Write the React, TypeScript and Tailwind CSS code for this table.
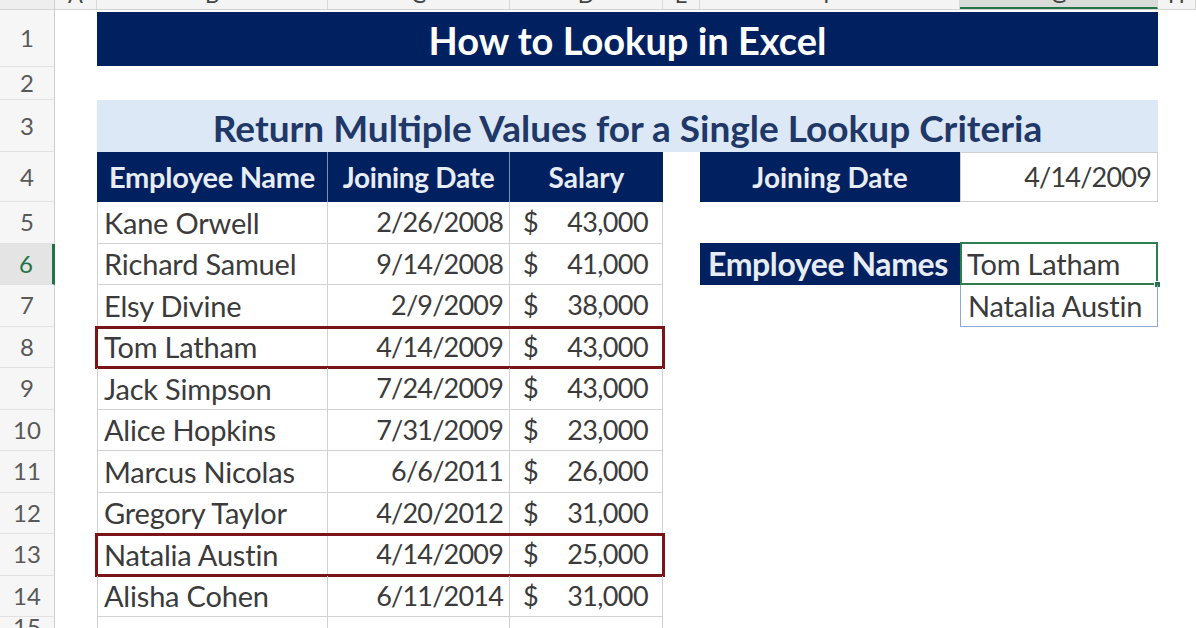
import React from 'react';

const rows = [
  { n: 5, name: 'Kane Orwell', date: '2/26/2008', salary: '43,000' },
  { n: 6, name: 'Richard Samuel', date: '9/14/2008', salary: '41,000' },
  { n: 7, name: 'Elsy Divine', date: '2/9/2009', salary: '38,000' },
  { n: 8, name: 'Tom Latham', date: '4/14/2009', salary: '43,000', hit: true },
  { n: 9, name: 'Jack Simpson', date: '7/24/2009', salary: '43,000' },
  { n: 10, name: 'Alice Hopkins', date: '7/31/2009', salary: '23,000' },
  { n: 11, name: 'Marcus Nicolas', date: '6/6/2011', salary: '26,000' },
  { n: 12, name: 'Gregory Taylor', date: '4/20/2012', salary: '31,000' },
  { n: 13, name: 'Natalia Austin', date: '4/14/2009', salary: '25,000', hit: true },
  { n: 14, name: 'Alisha Cohen', date: '6/11/2014', salary: '31,000' },
];

const cols = [
  { l: 'A', w: 'w-[42px]' },
  { l: 'B', w: 'w-[231px]' },
  { l: 'C', w: 'w-[182px]' },
  { l: 'D', w: 'w-[153px]' },
  { l: 'E', w: 'w-[37px]' },
  { l: 'F', w: 'w-[260px]' },
  { l: 'G', w: 'w-[198px]' },
  { l: 'H', w: 'flex-1' },
];

function RowHead({ n, active }: { n: number | string; active?: boolean }) {
  return (
    <div
      className={
        'w-[55px] shrink-0 flex items-center justify-center text-[24px] border-b border-[#e2e2e2] ' +
        (active
          ? 'bg-[#e4e4e4] text-[#217346] border-r-[3px] border-r-[#217346]'
          : 'bg-[#f6f6f6] text-[#595959] border-r border-r-[#cfcfcf]')
      }
    >
      {n}
    </div>
  );
}

export default function App() {
  return (
    <div
      className="w-[1196px] h-[628px] overflow-hidden bg-white text-[#3b3b3b]"
      style={{ fontFamily: 'Lato, "Open Sans", sans-serif' }}
    >
      {/* column header strip, mostly scrolled off */}
      <div className="flex h-[10px] overflow-hidden border-b border-[#d4d4d4]">
        <div className="w-[55px] shrink-0 bg-[#eeeeee] border-r border-[#cfcfcf]" />
        {cols.map(c => (
          <div
            key={c.l}
            className={
              c.w +
              ' shrink-0 flex justify-center border-r border-[#d8d8d8] ' +
              (c.l === 'G' ? 'bg-[#d9dcd9] border-b-2 border-b-[#217346]' : 'bg-[#f4f4f4]')
            }
          >
            <span className="text-[22px] leading-[24px] -mt-[17px] text-[#444]">{c.l}</span>
          </div>
        ))}
      </div>

      {/* row 1 */}
      <div className="flex h-[57px]">
        <RowHead n={1} />
        <div className="w-[42px] shrink-0" />
        <div className="w-[1061px] shrink-0 pt-[2px] pb-[1px]">
          <div className="h-full bg-[#002060] text-white font-bold text-[38px] flex items-center justify-center pt-[2px]">
            How to Lookup in Excel
          </div>
        </div>
      </div>

      {/* row 2 */}
      <div className="flex h-[33px]">
        <RowHead n={2} />
      </div>

      {/* row 3 */}
      <div className="flex h-[52px]">
        <RowHead n={3} />
        <div className="w-[42px] shrink-0" />
        <div className="w-[1061px] shrink-0 bg-[#dce8f6] text-[#1f3868] font-bold text-[37px] flex items-center justify-center pt-[4px]">
          Return Multiple Values for a Single Lookup Criteria
        </div>
      </div>

      {/* row 4 */}
      <div className="flex h-[50px]">
        <RowHead n={4} />
        <div className="w-[42px] shrink-0" />
        <div className="w-[566px] shrink-0 flex bg-[#002060] text-[#e8ecf5] font-bold text-[28px]">
          <div className="w-[231px] flex items-center justify-center border-r border-[#7d8fb8] text-[29px] tracking-[-0.3px]">Employee Name</div>
          <div className="w-[182px] flex items-center justify-center border-r border-[#7d8fb8] tracking-[-0.3px]">Joining Date</div>
          <div className="flex-1 flex items-center justify-center">Salary</div>
        </div>
        <div className="w-[37px] shrink-0" />
        <div className="w-[260px] shrink-0 bg-[#002060] text-[#e8ecf5] font-bold text-[28px] flex items-center justify-center">
          Joining Date
        </div>
        <div className="w-[198px] shrink-0 border border-[#d0d0d0] flex items-center justify-end pr-[6px] text-[27px] tracking-[-0.8px]">
          4/14/2009
        </div>
      </div>

      {/* rows 5-14 */}
      {rows.map(r => (
        <div key={r.n} className="flex h-[41.5px] relative">
          <RowHead n={r.n} active={r.n === 6} />
          <div className="w-[42px] shrink-0" />
          <div className="w-[231px] shrink-0 border-r border-b border-l border-[#d2d2d2] flex items-center pl-[6px] text-[29px] tracking-[-0.2px]">
            {r.name}
          </div>
          <div className="w-[182px] shrink-0 border-r border-b border-[#d2d2d2] flex items-center justify-end pr-[6px] text-[27px] tracking-[-0.8px]">
            {r.date}
          </div>
          <div className="w-[153px] shrink-0 border-r border-b border-[#d2d2d2] flex items-center justify-between pl-[13px] pr-[14px] text-[27px] tracking-[-0.6px]">
            <span>$</span>
            <span>{r.salary}</span>
          </div>
          <div className="w-[37px] shrink-0" />
          {r.n === 6 && (
            <>
              <div className="w-[260px] shrink-0 bg-[#002060] text-[#e8ecf5] font-bold text-[32px] flex items-center pl-[8px] -mt-[1px] tracking-[-0.4px]">
                Employee Names
              </div>
              <div className="w-[198px] shrink-0 relative border-2 border-[#2e7d4f] flex items-center pl-[5px] text-[29px] tracking-[-0.2px] -mt-[2px]">
                Tom Latham
                <div className="absolute -right-[5px] -bottom-[5px] w-[7px] h-[7px] bg-[#217346] border border-white" />
              </div>
            </>
          )}
          {r.n === 7 && (
            <>
              <div className="w-[260px] shrink-0" />
              <div className="w-[198px] shrink-0 border border-t-0 border-[#8ea6d8] flex items-center pl-[7px] text-[29px] tracking-[-0.2px]">
                Natalia Austin
              </div>
            </>
          )}
          {r.hit && (
            <div className="absolute left-[95px] w-[570px] -top-[1px] -bottom-[1px] border-[3px] border-[#7a1418] pointer-events-none" />
          )}
        </div>
      ))}

      {/* row 15, cut off */}
      <div className="flex h-[20px]">
        <RowHead n={15} />
        <div className="w-[42px] shrink-0" />
        <div className="w-[231px] shrink-0 border-l border-r border-[#d2d2d2]" />
        <div className="w-[182px] shrink-0 border-r border-[#d2d2d2]" />
        <div className="w-[153px] shrink-0 border-r border-[#d2d2d2]" />
      </div>
    </div>
  );
}
